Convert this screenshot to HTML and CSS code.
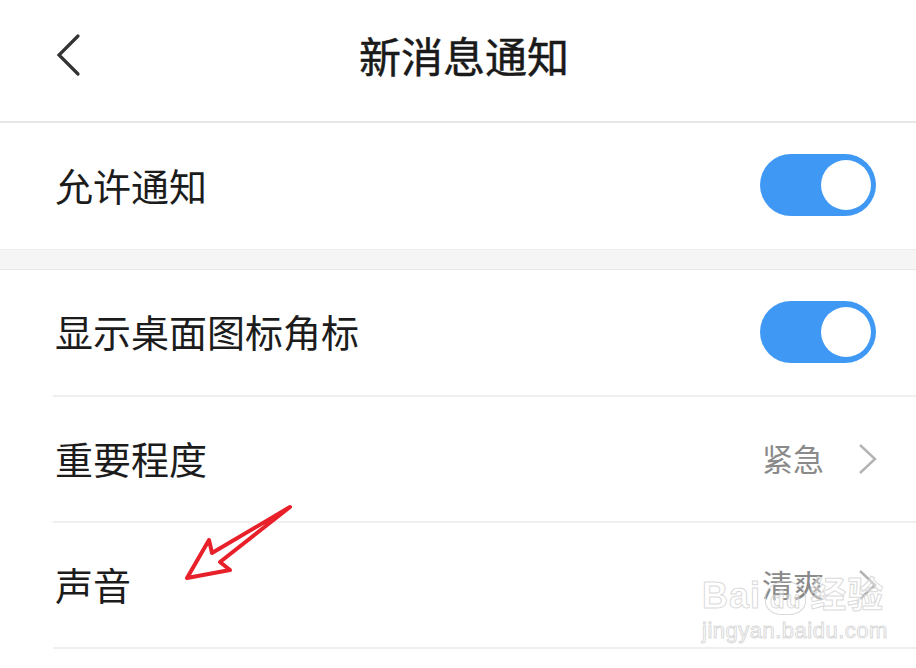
FILE: index.html
```html
<!DOCTYPE html>
<html>

<head>
    <meta charset="UTF-8">
    <title>新消息通知</title>
    <link rel="stylesheet" href="styles.css">
</head>

<body>
    <div id="page">
        <div class="header">
            <div class="back">
                <svg width="30" height="48" viewBox="0 0 30 48">
                    <polyline points="26,5 7,24 26,43" fill="none" stroke="#333" stroke-width="3.2" stroke-linecap="round" stroke-linejoin="miter" />
                </svg>
            </div>
            <div class="title">新消息通知</div>
        </div>

        <div class="group">
            <div class="row first">
                <div class="label">允许通知</div>
                <div class="switch on"><span class="knob"></span></div>
            </div>
        </div>

        <div class="gap"></div>

        <div class="group list">
            <div class="row">
                <div class="label">显示桌面图标角标</div>
                <div class="switch on"><span class="knob"></span></div>
            </div>
            <div class="row">
                <div class="label">重要程度</div>
                <div class="right">
                    <span class="value">紧急</span>
                    <svg class="chev" width="20" height="32" viewBox="0 0 20 32">
                        <polyline points="2,2 17,16 2,30" fill="none" stroke="#b3b3b3" stroke-width="2.4" />
                    </svg>
                </div>
            </div>
            <div class="row">
                <div class="label">声音</div>
                <div class="right">
                    <span class="value">清爽</span>
                    <svg class="chev" width="20" height="32" viewBox="0 0 20 32">
                        <polyline points="2,2 17,16 2,30" fill="none" stroke="#b3b3b3" stroke-width="2.4" />
                    </svg>
                </div>
            </div>
        </div>

        <!-- 标注箭头 -->
        <svg class="mark" width="916" height="668" viewBox="0 0 916 668">
            <path d="M290,507 L212,553 L209,540 L187,578 L230,570 L220,562 Z" fill="none" stroke="#e8202a" stroke-width="4" stroke-linejoin="round" />
        </svg>

        <!-- 水印 -->
        <div class="watermark">
            <div class="wm_top">Bai<span class="paw">du</span>经验</div>
            <div class="wm_url">jingyan.baidu.com</div>
        </div>
    </div>
</body>

</html>
```

FILE: styles.css
```css
* {
    box-sizing: border-box;
}

body {
    margin: 0;
    background: #fff;
    font-family: "Noto Sans CJK SC", "Noto Sans", sans-serif;
    color: #1c1c1c;
}

#page {
    width: 916px;
    height: 668px;
    position: relative;
    overflow: hidden;
}

.header {
    height: 123px;
    border-bottom: 2px solid #e6e6e6;
    display: flex;
    align-items: center;
    justify-content: center;
    position: relative;
}

.header .back {
    position: absolute;
    left: 52px;
    top: 31px;
}

.title {
    font-size: 42px;
    font-weight: normal;
    -webkit-text-stroke: 0.5px #1a1a1a;
    color: #1a1a1a;
    margin-left: 12px;
    margin-top: -12px;
}

.row {
    height: 126px;
    display: flex;
    align-items: center;
    justify-content: space-between;
    padding: 0 40px 0 55px;
}

.list .row {
    margin-left: 53px;
    padding-left: 2px;
    border-bottom: 2px solid #efefef;
    height: 126px;
}

.list .row:first-child {
    height: 127px;
}

.label {
    font-size: 38px;
    color: #1c1c1c;
    margin-top: -4px;
}

.gap {
    height: 21px;
    background: #f5f5f5;
    border-top: 1px solid #ececec;
    border-bottom: 1px solid #e8e8e8;
}

.switch {
    width: 116px;
    height: 62px;
    border-radius: 31px;
    background: #3f99f4;
    position: relative;
    margin-top: -2px;
}

.switch .knob {
    position: absolute;
    right: 5px;
    top: 6px;
    width: 50px;
    height: 50px;
    border-radius: 50%;
    background: #fff;
}

.right {
    display: flex;
    align-items: center;
}

.value {
    font-size: 31px;
    color: #8a8a8a;
    margin-right: 34px;
    margin-top: -4px;
}

.chev {
    display: block;
    margin-right: -2px;
}

.mark {
    position: absolute;
    left: 0;
    top: 0;
    pointer-events: none;
}

.watermark {
    position: absolute;
    left: 702px;
    top: 574px;
    font-family: "Liberation Sans", "Noto Sans CJK SC", sans-serif;
    color: rgba(255, 255, 255, 0.4);
    -webkit-text-stroke: 1px rgba(205, 205, 205, 0.75);
    pointer-events: none;
}

.wm_top {
    font-size: 36px;
    font-weight: bold;
    line-height: 44px;
    letter-spacing: 1px;
}

.wm_top .paw {
    font-size: 24px;
    display: inline-block;
    padding: 4px 4px 0;
    margin: 0 4px;
    border: 1.5px solid rgba(205, 205, 205, 0.75);
    border-radius: 50% 50% 40% 40%;
    line-height: 28px;
}

.wm_url {
    font-size: 22px;
    line-height: 26px;
    letter-spacing: 0.5px;
}
```
